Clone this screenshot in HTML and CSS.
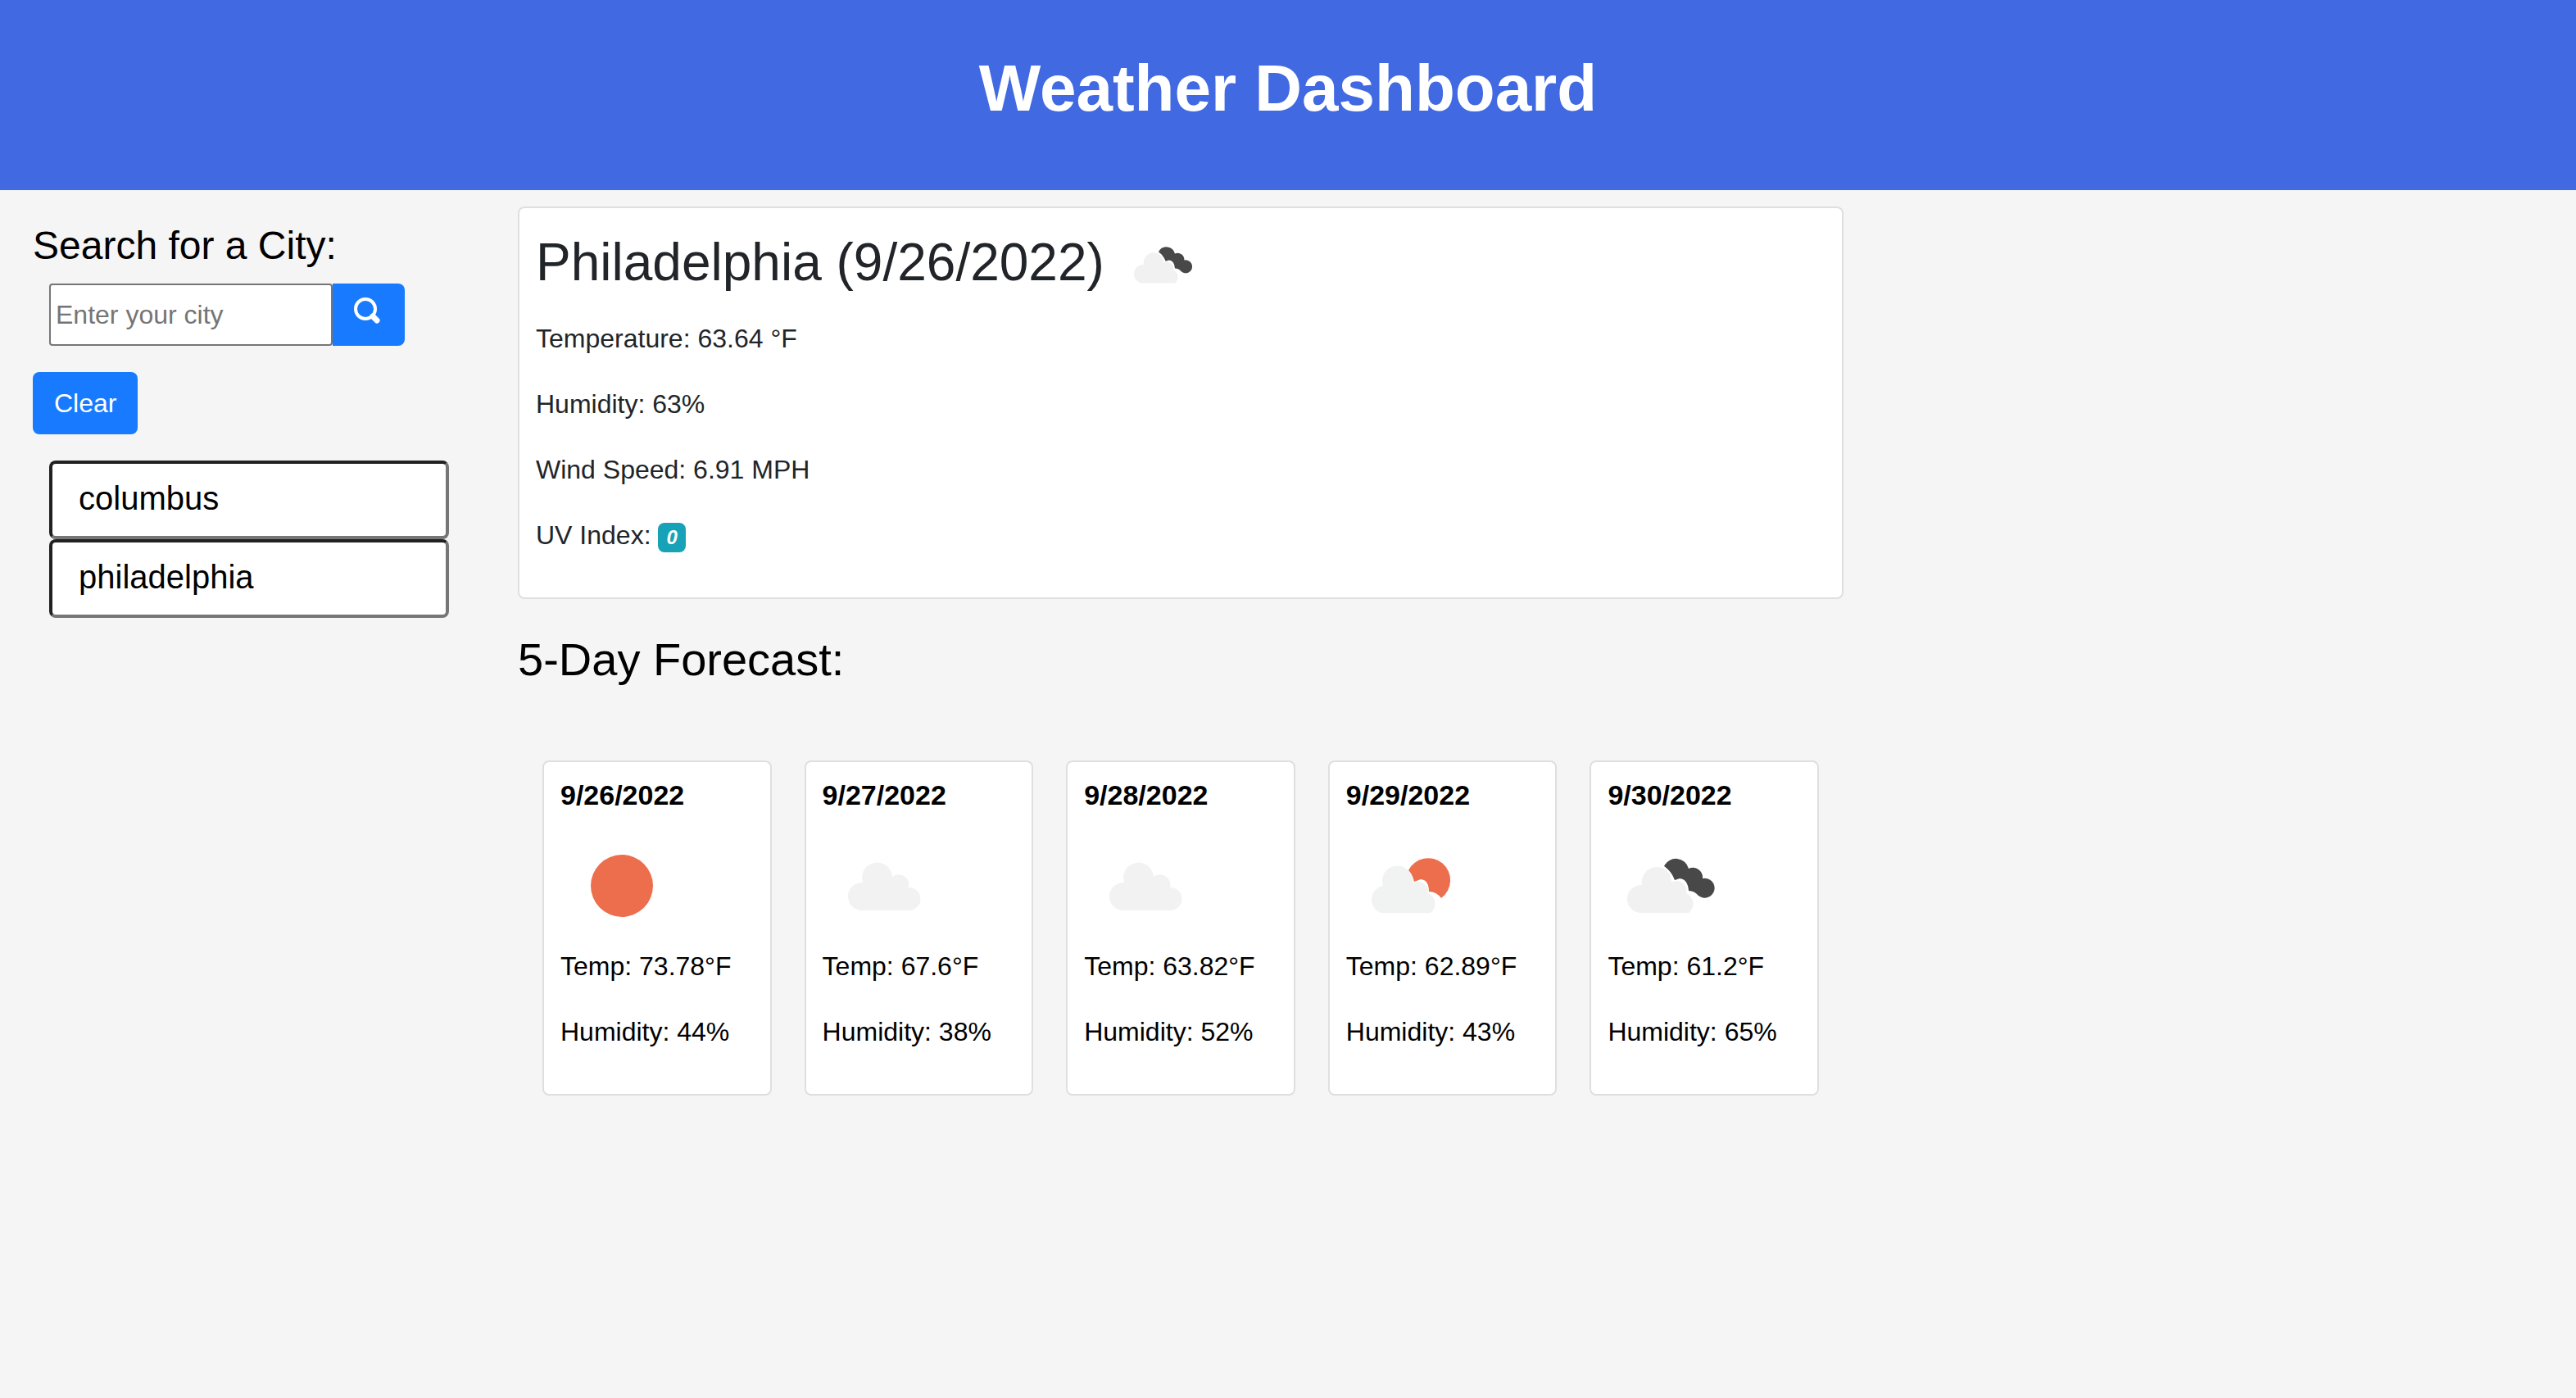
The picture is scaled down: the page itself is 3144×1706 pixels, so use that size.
FILE: index.html
```html
<!DOCTYPE html>
<html lang="en">
<head>
<meta charset="utf-8">
<meta name="viewport" content="width=device-width, initial-scale=1">
<title>Weather Dashboard</title>
<link rel="stylesheet" href="styles.css">
</head>
<body>
<svg class="sprite" aria-hidden="true">
  <symbol id="cloud" viewBox="0 0 150 148">
    <path fill="#f2f2f2" d="M47 104A17 17 0 0 1 49 70A18.5 18.5 0 1 1 85 63A12.5 12.5 0 0 1 105 76A14 14 0 0 1 106 104Z"/>
  </symbol>
  <symbol id="sun" viewBox="0 0 150 148">
    <circle cx="75" cy="74" r="38" fill="#ec6e4c"/>
  </symbol>
  <symbol id="sun-cloud" viewBox="0 0 150 148">
    <path fill="#ec6e4c" d="M76 55A27 27 0 1 1 116 89Q110 81 101 81Q101 67 91 66L83 69Q81 60 76 55Z"/>
    <path fill="#f1f2f2" d="M43 107A17 17 0 0 1 45 74A18.5 18.5 0 0 1 80 62Q82 66 82 71A12 12 0 0 1 100 83A14 14 0 0 1 103 107Z"/>
  </symbol>
  <symbol id="broken-clouds" viewBox="0 0 150 148">
    <path fill="#484849" d="M69 50A16 16 0 0 1 99 53A12 12 0 0 1 116 65A12 12 0 1 1 111 86Q106 80 99 80Q98 66 88 65L82 67Q78 56 69 50Z"/>
    <path fill="#f1f1f1" d="M40 107A17 17 0 0 1 42 73A18.5 18.5 0 0 1 76 60Q78 65 78 70A12 12 0 0 1 96 83A14 14 0 0 1 99 107Z"/>
  </symbol>
</svg>

<header class="banner"><h1 class="banner-title">Weather Dashboard</h1></header>

<div class="layout">
  <aside class="sidebar">
    <label class="search-title" for="city">Search for a City:</label>
    <form class="search">
      <input class="search-input" id="city" type="text" placeholder="Enter your city">
      <button class="search-button" type="button" aria-label="Search">
        <svg class="search-icon" viewBox="0 0 34 34"><circle cx="14" cy="14" r="12" fill="none" stroke="#fff" stroke-width="4"/><path d="M23 23L28 28" stroke="#fff" stroke-width="7" stroke-linecap="round"/></svg>
      </button>
    </form>
    <button class="clear" type="button">Clear</button>
    <div class="history">
      <input class="history-item" type="text" value="columbus" aria-label="Recent city" readonly>
      <input class="history-item" type="text" value="philadelphia" aria-label="Recent city" readonly>
    </div>
  </aside>

  <main class="main">
    <section class="card current">
      <h2 class="current-title"><span>Philadelphia (9/26/2022)</span><svg class="current-icon"><use href="#broken-clouds"/></svg></h2>
      <p>Temperature: 63.64 °F</p>
      <p>Humidity: 63%</p>
      <p>Wind Speed: 6.91 MPH</p>
      <p>UV Index: <em class="badge">0</em></p>
    </section>
    <h3 class="forecast-title">5-Day Forecast:</h3>
    <section class="forecast">
      <article class="card day"><h4 class="day-date">9/26/2022</h4><svg class="day-icon"><use href="#sun"/></svg><p>Temp: 73.78°F</p><p>Humidity: 44%</p></article>
      <article class="card day"><h4 class="day-date">9/27/2022</h4><svg class="day-icon"><use href="#cloud"/></svg><p>Temp: 67.6°F</p><p>Humidity: 38%</p></article>
      <article class="card day"><h4 class="day-date">9/28/2022</h4><svg class="day-icon"><use href="#cloud"/></svg><p>Temp: 63.82°F</p><p>Humidity: 52%</p></article>
      <article class="card day"><h4 class="day-date">9/29/2022</h4><svg class="day-icon"><use href="#sun-cloud"/></svg><p>Temp: 62.89°F</p><p>Humidity: 43%</p></article>
      <article class="card day"><h4 class="day-date">9/30/2022</h4><svg class="day-icon"><use href="#broken-clouds"/></svg><p>Temp: 61.2°F</p><p>Humidity: 65%</p></article>
    </section>
  </main>
</div>
</body>
</html>
```
FILE: styles.css
```css
* { box-sizing: border-box; }
body { margin: 0; background: #f5f5f5; color: #000; font: 32px/48px "Liberation Sans", Arial, sans-serif; }
h1, h2, h3, h4, p { margin: 0; }
input, button { font: inherit; }
.sprite { display: none; }

.banner { padding: 60px 60px 76px; background: #4169e1; color: #fff; text-align: center; }
.banner-title { font-size: 80px; line-height: 96px; font-weight: 700; }

.layout { display: flex; align-items: flex-start; }
.sidebar { flex: 0 0 592px; min-width: 0; padding: 40px; }
.search-title { display: block; margin-bottom: 18px; font-size: 48px; line-height: 56px; }
.search { display: flex; height: 76px; margin: 0 20px 32px; }
.search-input { width: 346px; padding: 0 6px; border: 2px solid #767676; border-radius: 4px; background: #fff; }
.search-input::placeholder { color: #757575; opacity: 1; }
.search-button { width: 88px; padding: 14px 26px 22px; border: 0; border-radius: 0 8px 8px 0; background: #187bff; }
.search-icon { display: block; width: 34px; height: 34px; }
.clear { display: block; height: 76px; padding: 0 26px; border: 0; border-radius: 8px; background: #187bff; color: #fff; }
.history { display: flex; flex-direction: column; margin: 32px 4px 0 20px; }
.history-item { width: 100%; height: 96px; padding: 0 32px 4px; border: 4px solid; border-color: #212121 #767676 #767676 #212121; border-radius: 8px; background: #fff; color: #000; font-size: 40px; }

.main { flex: 0 1 1658px; padding: 20px 0 40px 40px; }
.card { padding: 20px; border: 2px solid #dfdfdf; border-radius: 8px; background: #fff; }
.card p { margin-bottom: 32px; }
.current { color: #212529; }
.current-title { display: flex; gap: 20px; margin-bottom: 16px; font-size: 64px; line-height: 92px; font-weight: 400; }
.current-icon { width: 100px; height: 99px; }
.badge { display: inline-block; padding: 6px 10px; border-radius: 8px; background: #17a2b8; color: #fff; font-size: 24px; line-height: 24px; font-weight: 700; }
.forecast-title { margin: 40px 0 89px; font-size: 56px; line-height: 68px; font-weight: 400; }
.forecast { display: grid; grid-template-columns: repeat(5, 1fr); gap: 40px; padding: 0 30px; }
.day-date { margin-bottom: 16px; font-size: 34px; line-height: 41px; }
.day-icon { display: block; width: 150px; height: 148px; }
```
